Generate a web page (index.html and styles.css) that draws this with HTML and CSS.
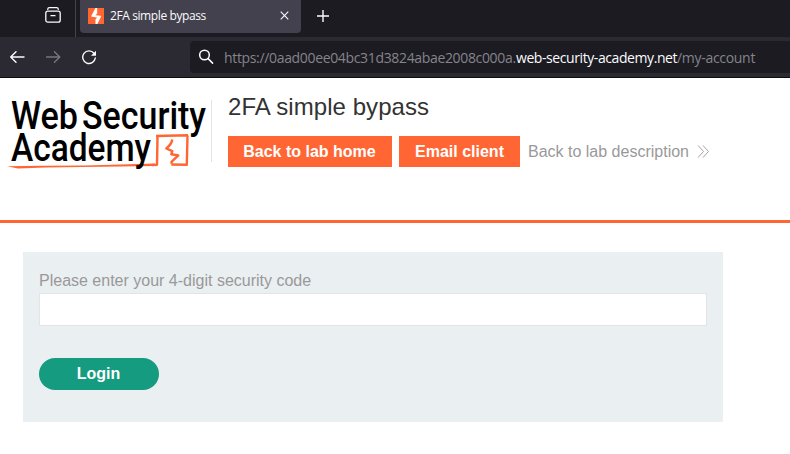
FILE: index.html
```html
<!DOCTYPE html>
<html lang="en">
<head>
<meta charset="utf-8">
<title>2FA simple bypass</title>
<link rel="stylesheet" href="styles.css">
</head>
<body>
<div class="tabstrip">
  <div class="recent">
    <svg width="16" height="16" viewBox="0 0 16 16"><path d="M2.7 2.3Q2.9.7 4.3.7h7.4q1.4 0 1.6 1.6"/><rect x=".8" y="4.2" width="14.4" height="11" rx="2"/><path d="M6 8.7h4"/></svg>
  </div>
  <div class="tab">
    <svg class="favicon" width="16" height="16" viewBox="0 0 16 16"><path fill="#ff6633" d="M0 0h16v16H0z"/><path fill="#fff" d="M7.500 0h1.700v5.600l-1.700 1.700 5.300.5v1.400L9.300 16H7.500v-4.700l1.700-1.700-5.700-.8V7.500z"/></svg>
    <span class="tab-title">2FA simple bypass</span>
    <svg class="close" width="9" height="9" viewBox="0 0 9 9"><path d="M.7.7l7.6 7.6M8.3.7L.7 8.3"/></svg>
  </div>
  <svg class="plus" width="12" height="12" viewBox="0 0 12 12"><path d="M6 0v12M0 6h12"/></svg>
</div>
<div class="toolbar">
  <svg class="back" width="15" height="12" viewBox="0 0 15 12"><path d="M14 6H.7M6 .7L.7 6 6 11.300"/></svg>
  <svg class="forward" width="15" height="12" viewBox="0 0 15 12"><path d="M.5 6h13.300M8.500 .7L13.800 6 8.500 11.300"/></svg>
  <svg class="reload" width="15" height="15" viewBox="0 0 15 15"><path d="M12 3.300A6.300 6.300 0 1 0 13.300 8"/><path class="tip" d="M14 .8v5H9z"/></svg>
  <div class="address">
    <svg class="search" width="15" height="15" viewBox="0 0 15 15"><circle cx="5.500" cy="6" r="4.800"/><path d="M9.100 9.600l4.500 4.500"/></svg>
    <span class="url"><span class="host">https://0aad00ee04bc31d3824abae2008c000a.</span><span class="domain">web-security-academy.net</span><span class="path">/my-account</span></span>
  </div>
</div>
<header class="lab-header">
  <svg class="logo" width="203" height="80" viewBox="8 94 203 80">
    <text x="11" y="129" textLength="67" lengthAdjust="spacingAndGlyphs">Web</text>
    <text x="82" y="129" textLength="124" lengthAdjust="spacingAndGlyphs">Security</text>
    <path class="fill" d="M7 166.300Q40 165.500 85 165.500L155 163.600v2.400L120 166.500 45 167.500 18 168.500z"/>
    <text x="11" y="161" textLength="140" lengthAdjust="spacingAndGlyphs">Academy</text>
    <path class="ink" d="M152 165l5-.2.500-27.800M156 136l32-.7M187.500 135.500l-.7 29.200-15.500-.2"/>
    <path class="ink" d="M172.300 139.500q-.5 4.500-6 9l6 2.700-1 3 7 1.200-6.800 6.500.2 2"/>
  </svg>
  <div class="lab-info">
    <h1>2FA simple bypass</h1>
    <div class="actions">
      <a class="button home">Back to lab home</a>
      <a class="button email">Email client</a>
      <a class="description">Back to lab description
        <svg width="13" height="13" viewBox="0 0 13 13"><path d="M1 .5l5.500 6-5.500 6M6 .5l5.500 6-5.500 6"/></svg>
      </a>
    </div>
  </div>
</header>
<main>
  <form class="login">
    <label for="code">Please enter your 4-digit security code</label>
    <input id="code" type="text">
    <button type="button">Login</button>
  </form>
</main>
</body>
</html>
```
FILE: styles.css
```css
* { box-sizing: border-box; }
body { margin: 0; height: 454px; overflow: hidden; background: #fff; font: 16px/20px "Liberation Sans", Arial, sans-serif; }
svg { display: block; flex: none; fill: none; }
.tabstrip { height: 37px; display: flex; background: #1c1b22; }
.recent { width: 76px; padding: 7px 0 0 45px; border-right: 1px solid #45444c; }
.recent svg { stroke: #fbfbfe; stroke-width: 1.3; stroke-linecap: round; }
.tab { width: 221px; height: 33px; margin-left: 4px; padding: 0 12px 2px 8px; display: flex; align-items: center; background: #42414d; border-radius: 0 0 4px 4px; color: #fbfbfe; }
.tab-title { margin-left: 6px; flex: 1; font: 12px/16px "Open Sans", sans-serif; letter-spacing: -.4px; white-space: nowrap; }
.close { stroke: #fbfbfe; stroke-width: 1.1; }
.plus { margin: 10px 0 0 16px; stroke: #fbfbfe; stroke-width: 1.4; }
.toolbar { height: 41px; padding-left: 10px; display: flex; align-items: center; background: #2b2a33; border-bottom: 1px solid #0c0c0d; }
.back, .forward, .reload { stroke: #fbfbfe; stroke-width: 1.4; stroke-linecap: round; stroke-linejoin: round; }
.forward { margin-left: 21px; stroke: #77767d; }
.reload { margin-left: 21px; }
.reload .tip { fill: #fbfbfe; stroke: none; }
.address { flex: 1; height: 32px; margin: 0 0 1px 93px; padding-left: 9px; display: flex; align-items: center; background: #1c1b22; border-radius: 4px 0 0 4px; }
.search { stroke: #fbfbfe; stroke-width: 1.5; stroke-linecap: round; }
.url { margin: 3px 0 0 10px; display: flex; font: 14px/20px "Open Sans", sans-serif; color: #85848b; white-space: nowrap; }
.host { width: 292px; letter-spacing: -.34px; }
.domain { width: 161px; color: #fbfbfe; letter-spacing: -.42px; }
.path { letter-spacing: -.3px; }
.lab-header { height: 145px; padding: 16px 0 0 8px; display: flex; border-bottom: 3px solid #ff6633; }
.logo { overflow: visible; font: 500 38px Roboto, sans-serif; }
.logo text { fill: #000; }
.logo .fill { fill: #ff6633; }
.logo .ink { stroke: #ff6633; stroke-width: 2.400; stroke-linejoin: round; }
.lab-info { height: 62px; margin-top: 6px; padding-left: 16px; border-left: 1px solid #e3e3e3; }
h1 { margin: -7px 0 15px; font-size: 24px; line-height: 28px; font-weight: 400; letter-spacing: .06px; color: #333332; }
.actions { display: flex; align-items: center; white-space: nowrap; }
.button { height: 31px; line-height: 31px; text-align: center; font-weight: 700; color: #fff; background: #ff6633; }
.home { width: 164px; padding-right: 1px; }
.email { width: 121px; margin-left: 7px; }
.description { margin-left: 8px; display: flex; align-items: center; gap: 8px; color: #999; }
.description svg { stroke: #999; stroke-width: .9; }
main { padding: 29px 0 0 23px; }
.login { width: 700px; height: 170px; padding: 19px 16px 0; background: #eaeff2; }
label { display: block; height: 22px; color: #999; }
input { display: block; width: 668px; height: 33px; border: 1px solid #e2e4e5; background: #fff; outline: 0; }
button { display: block; width: 120px; height: 32px; margin-top: 32px; padding: 0 1px 0 0; border: 0; border-radius: 16px; background: #159b80; color: #fff; font: 700 16px/30px "Liberation Sans", sans-serif; }
```
